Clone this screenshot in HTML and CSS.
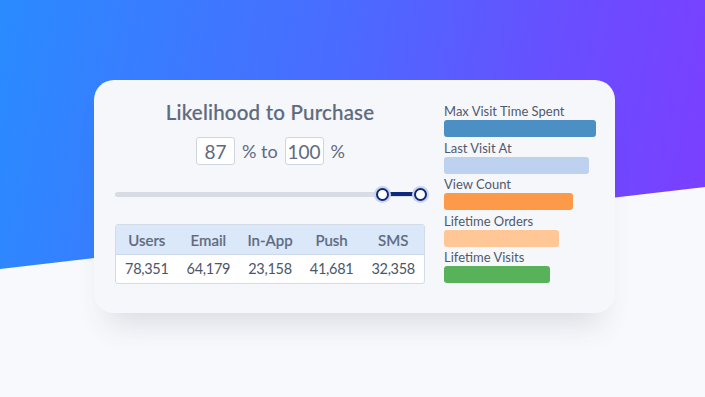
FILE: index.html
```html
<!DOCTYPE html>
<html>
<head>
<meta charset="utf-8">
<link rel="stylesheet" href="styles.css">
</head>
<body>
<div class="stage">
  <div class="card">
    <div class="left">
      <h1 class="title">Likelihood to Purchase</h1>
      <div class="range">
        <span class="box">87</span>
        <span class="unit">% to</span>
        <span class="box">100</span>
        <span class="unit">%</span>
      </div>
      <div class="slider">
        <div class="track"></div>
        <div class="fill"></div>
        <span class="knob knob-a"></span>
        <span class="knob knob-b"></span>
      </div>
      <div class="table">
        <div class="row head">
          <span>Users</span><span>Email</span><span>In-App</span><span>Push</span><span>SMS</span>
        </div>
        <div class="row body">
          <span>78,351</span><span>64,179</span><span>23,158</span><span>41,681</span><span>32,358</span>
        </div>
      </div>
    </div>
    <div class="right">
      <div class="item"><div class="label">Max Visit Time Spent</div><div class="bar c1" style="width:152px"></div></div>
      <div class="item"><div class="label">Last Visit At</div><div class="bar c2" style="width:145px"></div></div>
      <div class="item"><div class="label">View Count</div><div class="bar c3" style="width:129px"></div></div>
      <div class="item"><div class="label">Lifetime Orders</div><div class="bar c4" style="width:115px"></div></div>
      <div class="item"><div class="label">Lifetime Visits</div><div class="bar c5" style="width:106px"></div></div>
    </div>
  </div>
</div>
</body>
</html>
```
FILE: styles.css
```css
* { box-sizing: border-box; margin: 0; padding: 0; }
html, body { width: 705px; height: 397px; overflow: hidden; }
body {
  font-family: "Lato", "Open Sans", sans-serif;
  background: linear-gradient(100deg, #2a8bff 0%, #4a6bff 45%, #6a4dff 75%, #7e3cff 100%);
  position: relative;
}
body::before {
  content: "";
  position: absolute;
  inset: 0;
  background: #f8f9fc;
  clip-path: polygon(0 269px, 705px 187px, 705px 397px, 0 397px);
}
.stage {
  position: relative;
  padding: 80px 0 0 94px;
}
.card {
  width: 521px;
  height: 233px;
  background: #f6f7fb;
  border-radius: 20px;
  box-shadow: 0 24px 30px -14px rgba(60, 70, 90, 0.16);
  display: grid;
  grid-template-columns: 310px 152px;
  column-gap: 19px;
  padding: 20px 19px 0 21px;
}
.left { display: flex; flex-direction: column; align-items: stretch; }
.title {
  font-size: 20.5px;
  line-height: 24px;
  font-weight: 500;
  color: #5e6a80;
  text-align: center;
  letter-spacing: 0.2px;
  -webkit-text-stroke: 0.2px #5e6a80;
}
.range {
  margin-top: 13px;
  display: flex;
  justify-content: center;
  align-items: center;
  gap: 6px;
  color: #5e6a80;
  font-size: 18px;
  padding-left: 2px;
}
.box {
  width: 39px;
  height: 28px;
  border: 1px solid #cfd5de;
  border-radius: 3px;
  background: #fff;
  display: flex;
  align-items: center;
  justify-content: center;
  color: #5e6a80;
  font-size: 19px;
}
.unit { margin: 0 1px; }
.slider {
  position: relative;
  margin-top: 22px;
  height: 14px;
}
.track {
  position: absolute;
  left: 0; right: 0; top: 5px;
  height: 5px;
  border-radius: 3px;
  background: #d8dde5;
}
.fill {
  position: absolute;
  left: 267px; width: 38px; top: 5px;
  height: 4px;
  background: #0e2a7c;
}
.knob {
  position: absolute;
  top: 1px;
  width: 13px; height: 13px;
  border-radius: 50%;
  background: #fff;
  border: 2px solid #0e2a7c;
  box-shadow: 0 0 0 2px #c9d2ee;
}
.knob-a { left: 261px; }
.knob-b { left: 299px; }
.table {
  margin-top: 23px;
  border: 1px solid #d3dbe6;
  border-radius: 3px;
  overflow: hidden;
  background: #fff;
}
.row {
  display: grid;
  grid-template-columns: repeat(5, 1fr);
  text-align: center;
  font-size: 15px;
}
.row.head {
  height: 30px;
  line-height: 30px;
  background: #dbe8fa;
  color: #5e6a80;
  font-weight: 500;
  -webkit-text-stroke: 0.2px #5e6a80;
  border-bottom: 1px solid #cdd8e8;
}
.row.body {
  height: 28px;
  line-height: 28px;
  color: #4c5668;
  font-size: 14.5px;
  letter-spacing: -0.3px;
}
.right {
  display: flex;
  flex-direction: column;
  gap: 2.5px;
  padding-top: 3px;
}
.label {
  font-size: 13px;
  line-height: 16px;
  color: #4f5a6e;
  font-weight: 400;
}
.bar {
  height: 17px;
  border-radius: 3px;
  margin-top: 1px;
}
.c1 { background: #4b8fc4; }
.c2 { background: #bcd2ee; }
.c3 { background: #fd9a4a; }
.c4 { background: #fec795; }
.c5 { background: #58b25a; }
```
